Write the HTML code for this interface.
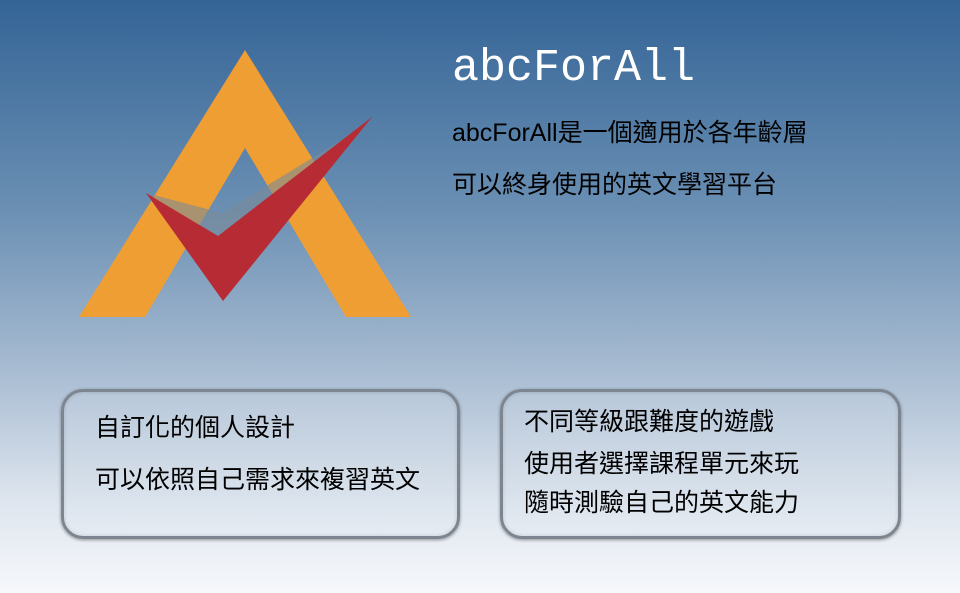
<!DOCTYPE html>
<html><head><meta charset="utf-8"><style>
html,body{margin:0;padding:0}
body{width:960px;height:593px;position:relative;overflow:hidden;
background:linear-gradient(180deg,#346496 0%,#6a8fb3 35%,#a7bbd1 62%,#dfe6ef 85%,#f6f8fb 100%);
font-family:"Liberation Sans","Noto Sans CJK TC",sans-serif;}
.t{position:absolute;white-space:nowrap;font-size:25px;color:#000;line-height:1}
.title{position:absolute;left:452px;top:46px;font-family:"Liberation Mono",monospace;font-size:45px;color:#fff;line-height:1}
.box{position:absolute;top:389px;height:144px;border:3px solid #7d8590;border-radius:22px;
background:linear-gradient(180deg,#b8c8da 0%,#cfdae6 50%,#e6ecf3 100%);
box-shadow:0 1px 3px rgba(0,0,0,.4), inset 0 0 4px rgba(0,0,0,.15)}
</style></head><body>
<svg width="960" height="593" style="position:absolute;left:0;top:0">
<polygon points="245,50 79,317 145,317 245,148 346,317 411,317" fill="#ef9e34"/>
<polygon points="146,193 222,213 350,135 372,117 218,236" fill="#7a8a98" opacity="0.6"/>
<polygon points="146,193 223,301 372,117 218,236" fill="#b72b35"/>
</svg>
<div class="title">abcForAll</div>
<div class="t" style="left:452px;top:121px">abcForAll是一個適用於各年齡層</div>
<div class="t" style="left:452px;top:173px">可以終身使用的英文學習平台</div>
<div class="box" style="left:61px;width:393px"></div>
<div class="box" style="left:500px;width:395px"></div>
<div class="t" style="left:95px;top:416px">自訂化的個人設計</div>
<div class="t" style="left:95px;top:468px">可以依照自己需求來複習英文</div>
<div class="t" style="left:524px;top:410px">不同等級跟難度的遊戲</div>
<div class="t" style="left:524px;top:452px">使用者選擇課程單元來玩</div>
<div class="t" style="left:524px;top:491px">隨時測驗自己的英文能力</div>
</body></html>
